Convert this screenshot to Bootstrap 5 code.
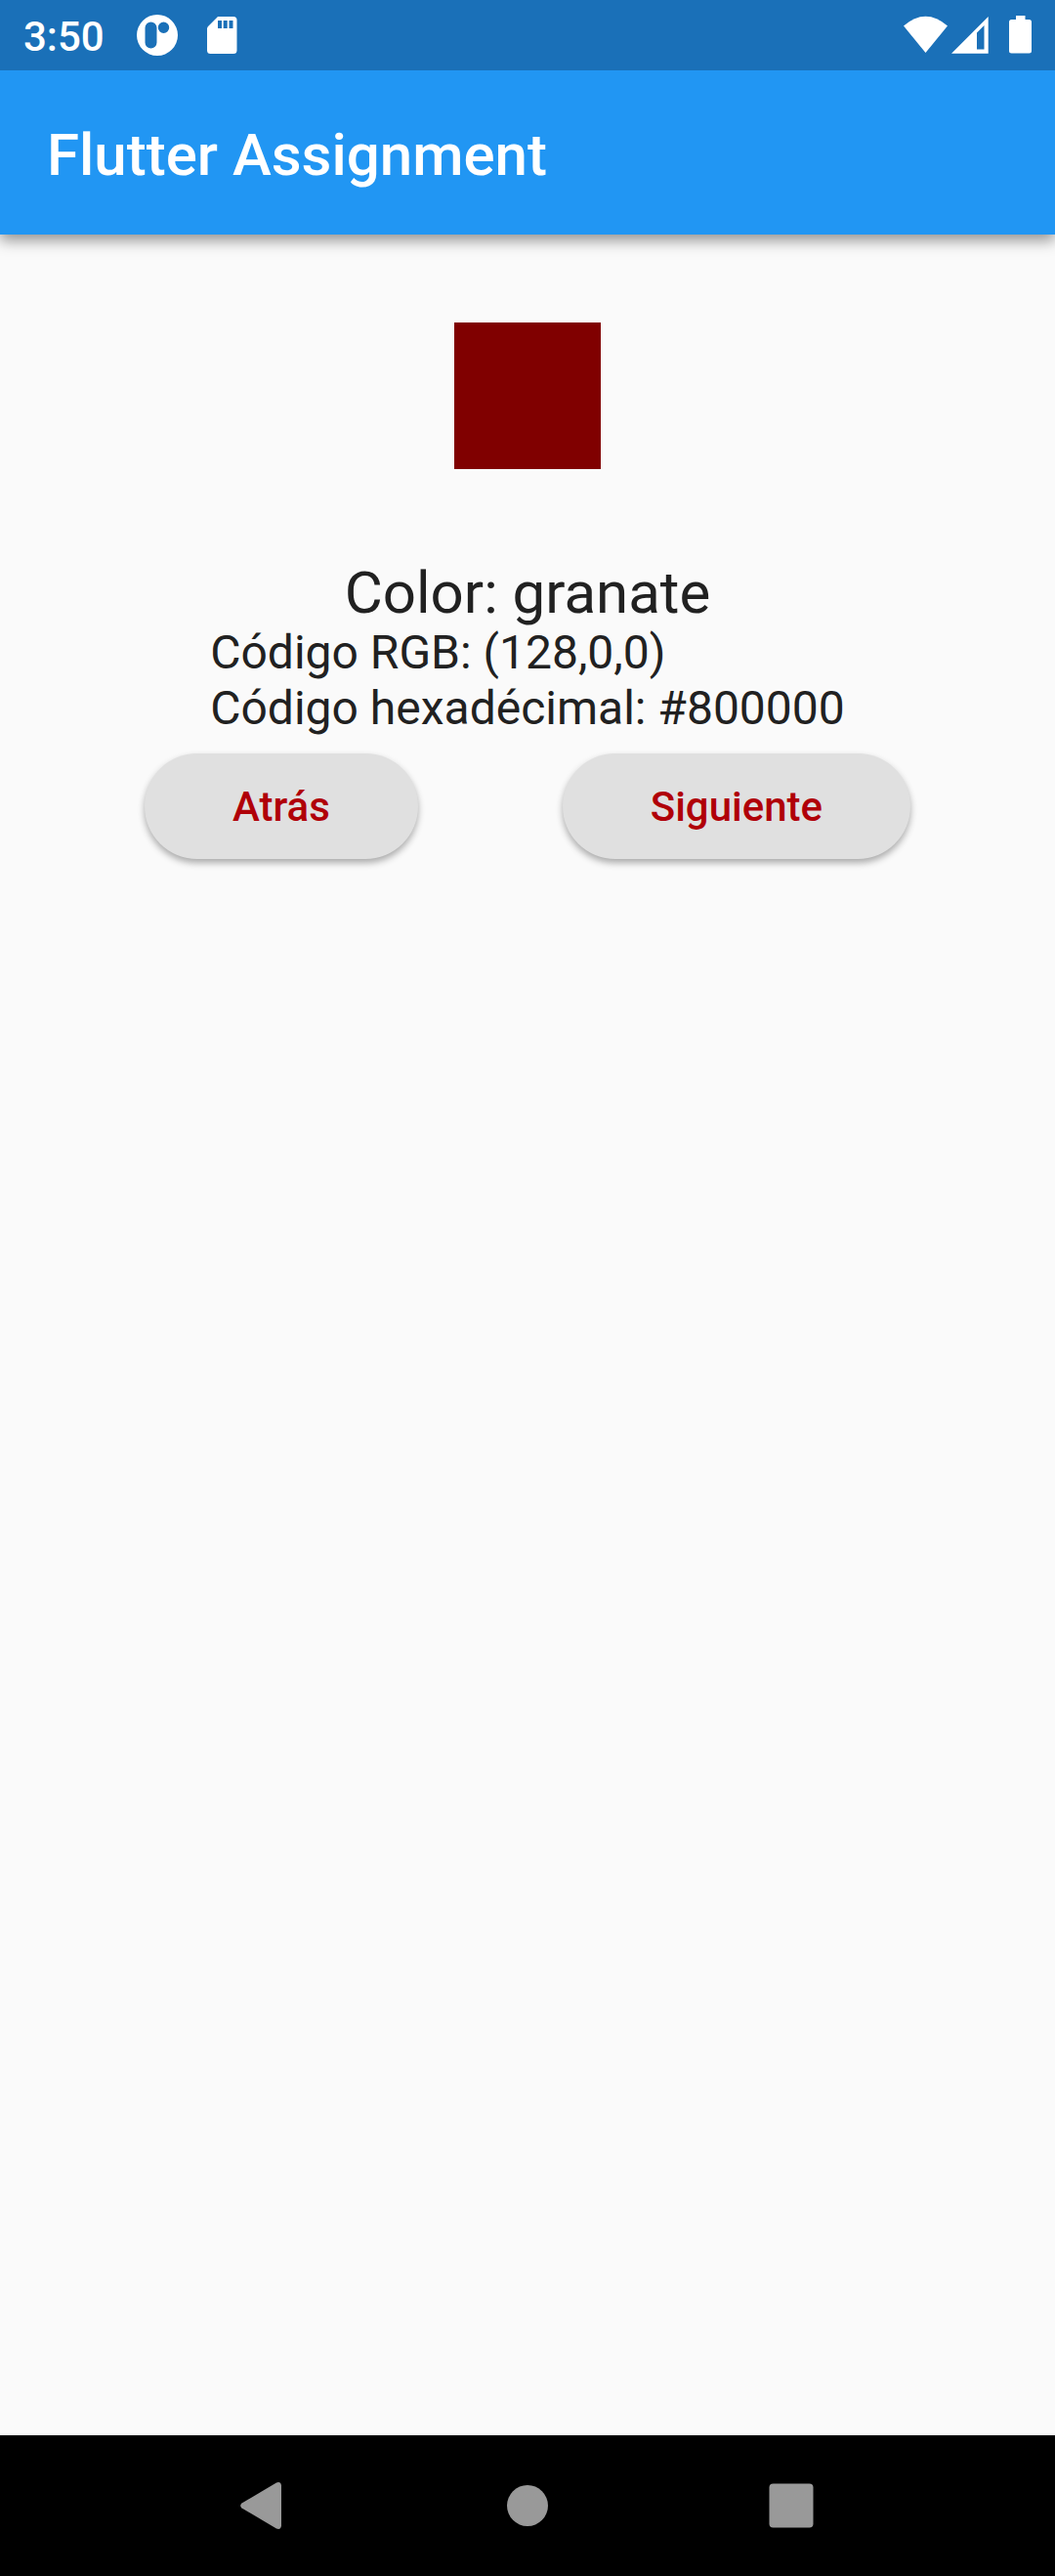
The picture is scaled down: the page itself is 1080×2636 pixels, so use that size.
<!DOCTYPE html>
<html lang="es">
<head>
<meta charset="utf-8">
<meta name="viewport" content="width=device-width, initial-scale=1">
<title>Flutter Assignment</title>
<link href="https://cdn.jsdelivr.net/npm/bootstrap@5.3.0/dist/css/bootstrap.min.css" rel="stylesheet">
<style>
body { font-family: Roboto, "Liberation Sans", sans-serif; background: #fafafa; color: #212121; }
.screen { height: 2636px; overflow: hidden; }
.status-strip { height: 72px; background: #1a70b8; color: #fff; padding-left: 24px; z-index: 1; }
.clock { font-size: 42px; font-weight: 500; line-height: 72px; width: 114px; padding-top: 2px; }
.app-header { height: 168px; background: #2196f3; padding: 6px 48px 0; box-shadow: 0 6px 14px rgba(0,0,0,.42); }
.app-title { font-size: 60px; font-weight: 500; line-height: 70px; color: #fff; }
.swatch { width: 150px; height: 150px; margin: 90px 0; background: #800000; }
.color-name { font-size: 60px; line-height: 70px; padding-top: 2px; }
.code-lines { margin-top: -3px; }
.code-line { font-size: 48px; line-height: 57px; }
.actions { margin-top: 18px; }
.pill { height: 108px; padding: 2px 90px 0; font-size: 42px; font-weight: 500; line-height: 50px; color: #b00008; background: #e0e0e0; border: 0; box-shadow: 0 4px 7px rgba(0,0,0,.32); }
.nav-strip { height: 144px; background: #000; }
</style>
<script src="https://cdn.jsdelivr.net/npm/bootstrap@5.3.0/dist/js/bootstrap.bundle.min.js"></script>
</head>
<body>
<div class="screen d-flex flex-column">
  <div class="status-strip d-flex justify-content-between flex-shrink-0">
    <div class="d-flex">
      <div class="clock">3:50</div>
      <svg width="110" height="72" viewBox="138 0 110 72" fill="#fff">
        <path fill-rule="evenodd" d="M161 15a21 21 0 1 1 0 42a21 21 0 0 1 0-42zM154.500 22.500a6 6 0 0 0-6 6v15a6 6 0 0 0 12 0v-15a6 6 0 0 0-6-6zM167.500 22.500a5.700 5.700 0 1 0 0 11.400a5.700 5.700 0 0 0 0-11.400z"/>
        <path fill-rule="evenodd" d="M223 17h16a3.500 3.500 0 0 1 3.500 3.500v31a3.500 3.500 0 0 1-3.500 3.500h-23.500a3.500 3.500 0 0 1-3.500-3.500v-22q0-1.400 1-2.500zM223 21v8h4v-8zM228.700 21v8h4v-8zM234.500 21v8h4v-8z"/>
      </svg>
    </div>
    <svg width="180" height="72" viewBox="900 0 180 72" fill="#fff">
      <path d="M925 26.500Q947.500 7 970 26.500L947.500 54z"/>
      <path fill-rule="evenodd" d="M974 54.700L1011.700 17V54.700zM1000 33.500V50.500H1007.500V26z"/>
      <path d="M1040 16h9.500v4h4a2.500 2.500 0 0 1 2.500 2.500v29.500a2.500 2.500 0 0 1-2.500 2.500h-18a2.500 2.500 0 0 1-2.500-2.500v-29.500a2.500 2.500 0 0 1 2.500-2.500h4.500z"/>
    </svg>
  </div>
  <header class="app-header d-flex align-items-center flex-shrink-0">
    <h1 class="app-title m-0">Flutter Assignment</h1>
  </header>
  <main class="d-flex flex-column align-items-center flex-grow-1">
    <div class="swatch"></div>
    <div class="color-name">Color: granate</div>
    <div class="code-lines">
      <div class="code-line">Código RGB: (128,0,0)</div>
      <div class="code-line">Código hexadécimal: #800000</div>
    </div>
    <div class="actions d-flex justify-content-evenly w-100">
      <button type="button" class="btn rounded-pill pill">Atrás</button>
      <button type="button" class="btn rounded-pill pill">Siguiente</button>
    </div>
  </main>
  <nav class="nav-strip flex-shrink-0">
    <svg class="d-block" width="1080" height="144" viewBox="0 0 1080 144" fill="#999">
      <path d="M247.500 69.500L283 48.500Q287.500 46.800 288 51.500V92.500Q287.500 97.200 283 95.500L247.500 74.500Q244.800 72 247.500 69.500z"/>
      <circle cx="540" cy="72" r="21"/>
      <rect x="787.500" y="49.500" width="45" height="45" rx="4"/>
    </svg>
  </nav>
</div>
</body>
</html>
